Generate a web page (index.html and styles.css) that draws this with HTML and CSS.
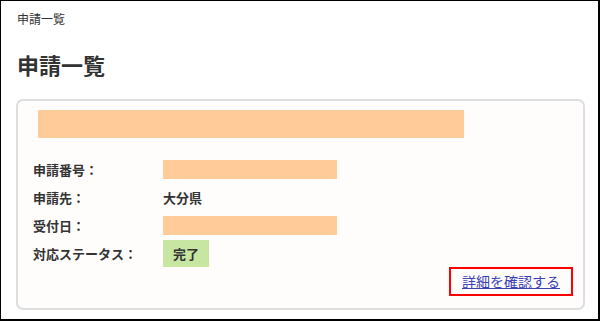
FILE: index.html
```html
<!DOCTYPE html>
<html lang="ja">
<head>
    <meta charset="UTF-8">
    <meta name="viewport" content="width=device-width, initial-scale=1.0">
    <title>申請一覧</title>
    <link rel="stylesheet" href="styles.css">
</head>
<body>
    <div class="page">
        <div class="breadcrumb">申請一覧</div>
        <h1 class="title">申請一覧</h1>

        <div class="card">
            <div class="card-title mask"></div>

            <div class="rows">
                <div class="row">
                    <span class="label">申請番号：</span>
                    <span class="value mask mask-short"></span>
                </div>
                <div class="row">
                    <span class="label">申請先：</span>
                    <span class="value">大分県</span>
                </div>
                <div class="row">
                    <span class="label">受付日：</span>
                    <span class="value mask mask-short"></span>
                </div>
                <div class="row">
                    <span class="label">対応ステータス：</span>
                    <span class="value"><span class="badge">完了</span></span>
                </div>
            </div>

            <div class="actions">
                <a class="detail-link" href="#">詳細を確認する</a>
            </div>
        </div>
    </div>
</body>
</html>
```

FILE: styles.css
```css
* {
    box-sizing: border-box;
}

body {
    margin: 0;
    font-family: "Noto Sans CJK JP", "Noto Sans", sans-serif;
    color: #333;
    background: #fff;
}

.page {
    width: 600px;
    height: 321px;
    border-top: 1px solid #000;
    border-left: 1px solid #000;
    border-right: 2px solid #000;
    border-bottom: 2px solid #000;
    padding: 10px 13px 0 15px;
    background: #fff;
}

.breadcrumb {
    font-size: 12px;
    line-height: 16px;
    padding-left: 1px;
}

.title {
    margin: 22px 0 20px;
    padding-left: 1px;
    font-size: 22px;
    line-height: 30px;
    font-weight: bold;
}

.card {
    height: 211px;
    border: 2px solid #dedede;
    border-radius: 7px;
    background: #fffdfc;
    padding: 9px 10px 0 15px;
}

.mask {
    background: #ffcc99;
}

.card-title {
    width: 426px;
    height: 28px;
    margin-left: 5px;
    margin-bottom: 17px;
}

.row {
    display: flex;
    align-items: center;
    height: 28px;
    font-size: 13px;
    font-weight: bold;
}

.label {
    width: 130px;
}

.mask-short {
    display: block;
    width: 174px;
    height: 19px;
}

.badge {
    display: inline-block;
    background: #c6e6a1;
    padding: 0 10px;
    line-height: 27px;
}

.actions {
    display: flex;
    justify-content: flex-end;
}

.detail-link {
    display: block;
    border: 2px solid #f00;
    padding: 0 11px;
    line-height: 25px;
    font-size: 14px;
    color: #3a3fb5;
    text-decoration: underline;
}
```
